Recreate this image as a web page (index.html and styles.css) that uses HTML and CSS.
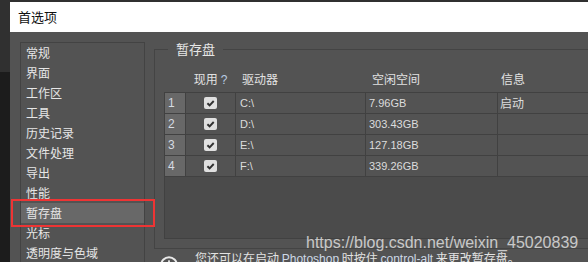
FILE: index.html
```html
<!DOCTYPE html>
<html lang="zh">

<head>
    <meta charset="UTF-8">
    <meta name="viewport" content="width=device-width, initial-scale=1.0">
    <title>首选项</title>
    <link rel="stylesheet" href="styles.css">
</head>

<body>
    <div class="desk">
        <div class="dialog">
            <div class="titlebar">首选项</div>
            <div class="dialog-body">
                <ul class="nav">
                    <li>常规</li>
                    <li>界面</li>
                    <li>工作区</li>
                    <li>工具</li>
                    <li>历史记录</li>
                    <li>文件处理</li>
                    <li>导出</li>
                    <li>性能</li>
                    <li class="active">暂存盘</li>
                    <li>光标</li>
                    <li>透明度与色域</li>
                </ul>

                <div class="main">
                    <fieldset class="group">
                        <legend>暂存盘</legend>
                        <div class="drive-head">
                            <span></span>
                            <span class="center">现用<span class="q">?</span></span>
                            <span class="pad">驱动器</span>
                            <span class="pad">空闲空间</span>
                            <span class="pad-sm">信息</span>
                        </div>
                        <div class="drives">
                            <div class="drive-row">
                                <span class="num">1</span>
                                <span class="check"><i class="box"></i></span>
                                <span class="cell">C:\</span>
                                <span class="cell size">7.96GB</span>
                                <span class="cell info">启动</span>
                            </div>
                            <div class="drive-row">
                                <span class="num">2</span>
                                <span class="check"><i class="box"></i></span>
                                <span class="cell">D:\</span>
                                <span class="cell size">303.43GB</span>
                                <span class="cell info"></span>
                            </div>
                            <div class="drive-row">
                                <span class="num">3</span>
                                <span class="check"><i class="box"></i></span>
                                <span class="cell">E:\</span>
                                <span class="cell size">127.18GB</span>
                                <span class="cell info"></span>
                            </div>
                            <div class="drive-row">
                                <span class="num">4</span>
                                <span class="check"><i class="box"></i></span>
                                <span class="cell">F:\</span>
                                <span class="cell size">339.26GB</span>
                                <span class="cell info"></span>
                            </div>
                        </div>
                    </fieldset>

                    <div class="hint">
                        <svg class="hint-icon" width="18" height="18" viewBox="0 0 18 18">
                            <circle cx="9" cy="9" r="7.8" fill="none" stroke="#e8e8e8" stroke-width="2" />
                            <rect x="8.1" y="7.5" width="1.8" height="5.5" fill="#e8e8e8" />
                            <rect x="8.1" y="4.3" width="1.8" height="1.8" fill="#e8e8e8" />
                        </svg>
                        <span>您还可以在启动 <span class="latin">Photoshop</span> 时按住 <span class="latin">control-alt</span> 来更改暂存盘。</span>
                    </div>
                </div>
            </div>
        </div>
    </div>

    <div class="watermark">https://blog.csdn.net/weixin_45020839</div>
</body>

</html>
```

FILE: styles.css
```css
/* page frame */
html,
body {
    margin: 0;
    height: 262px;
    overflow: hidden;
}

body {
    position: relative;
    background: linear-gradient(#303030 72px, #1c1c1c 72px);
    font-family: "Noto Sans CJK SC", "Noto Sans", sans-serif;
}

.desk {
    padding-top: 2px;
    padding-left: 10px;
}

.dialog {
    width: 720px;
    background-color: #535353;
}

.titlebar {
    height: 30px;
    line-height: 30px;
    padding-left: 8px;
    background-color: #FFFFFF;
    color: #111111;
    font-size: 13px;
}

.dialog-body {
    display: flex;
    gap: 9px;
    padding: 10px 0 0 10px;
    height: 260px;
}

/* left category list */
.nav {
    list-style: none;
    margin: 0;
    padding: 0;
    width: 125px;
    height: 260px;
    box-sizing: border-box;
    border: 1px solid #434343;
}

.nav li {
    position: relative;
    height: 20px;
    line-height: 20px;
    padding-left: 5px;
    font-size: 12px;
    color: #e6e6e6;
}

.nav li.active {
    background-color: #686868;
}

/* red highlight around the selected item */
.nav li.active::after {
    content: "";
    position: absolute;
    left: -10px;
    right: -11px;
    top: -4px;
    bottom: -4px;
    border: 2px solid #ee3434;
}

/* scratch disk group */
.main {
    display: flex;
    flex-direction: column;
}

.group {
    width: 520px;
    margin: -1px 0 0 0;
    padding: 0 0 9px 9px;
    border: 1px solid #444444;
    min-inline-size: 0;
}

.group legend {
    margin-left: 4px;
    padding: 0 8px;
    font-size: 13px;
    line-height: 16px;
    color: #e6e6e6;
}

.drive-head {
    display: grid;
    grid-template-columns: 20px 49px 129px 131px 1fr;
    column-gap: 1px;
    padding-left: 1px;
    margin-top: 13px;
    height: 18px;
    line-height: 18px;
    font-size: 12px;
    color: #e2e2e2;
}

.drive-head .center {
    text-align: center;
}

.drive-head .q {
    margin-left: 3px;
    font-family: "Liberation Sans", sans-serif;
    color: #b9cde4;
}

.drive-head .pad {
    padding-left: 6px;
}

.drive-head .pad-sm {
    padding-left: 3px;
}

.drives {
    margin-top: 4px;
    height: 147px;
    box-sizing: border-box;
    border: 1px solid #414141;
    border-right: none;
    background-color: #4b4b4b;
}

.drive-row {
    display: grid;
    grid-template-columns: 20px 49px 129px 131px 1fr;
    column-gap: 1px;
    height: 21px;
    box-sizing: border-box;
    border-bottom: 1px solid #414141;
    background-color: #414141;
    font-family: "Liberation Sans", "Noto Sans CJK SC", sans-serif;
    font-size: 11px;
    line-height: 20px;
    color: #dcdcdc;
}

.drive-row > span {
    background-color: #535353;
}

.drive-row .num {
    background-color: #686868;
    padding-left: 3px;
    font-size: 12px;
    color: #d6dbe2;
}

.drive-row .check {
    display: flex;
    align-items: center;
    justify-content: center;
}

.box {
    width: 13px;
    height: 12px;
    border-radius: 2px;
    background: #e0e0e0 url("data:image/svg+xml,%3Csvg xmlns='http://www.w3.org/2000/svg' width='13' height='12'%3E%3Cpath d='M3.4 6.2l2.2 2.1 4.1-4.3' fill='none' stroke='%23303030' stroke-width='1.9'/%3E%3C/svg%3E") no-repeat center;
}

.drive-row .cell {
    padding-left: 4px;
}

.drive-row .size {
    padding-left: 3px;
}

.drive-row .info {
    padding-left: 2px;
    font-family: "Noto Sans CJK SC", sans-serif;
    font-size: 12px;
}

/* hint line under the group */
.hint {
    display: flex;
    align-items: flex-start;
    gap: 17px;
    margin-top: 1px;
    padding-left: 6px;
    font-size: 12px;
    line-height: 16px;
    color: #e2e2e2;
    white-space: nowrap;
}

.hint-icon {
    flex: none;
    margin-top: 6px;
}

.hint .latin {
    font-family: "Liberation Sans", sans-serif;
    color: #cdd8e6;
}

/* csdn watermark over the screenshot */
.watermark {
    position: absolute;
    left: 306px;
    top: 235px;
    font-family: "Liberation Sans", sans-serif;
    font-size: 16px;
    line-height: 16px;
    color: rgba(235, 235, 235, 0.78);
}
```
